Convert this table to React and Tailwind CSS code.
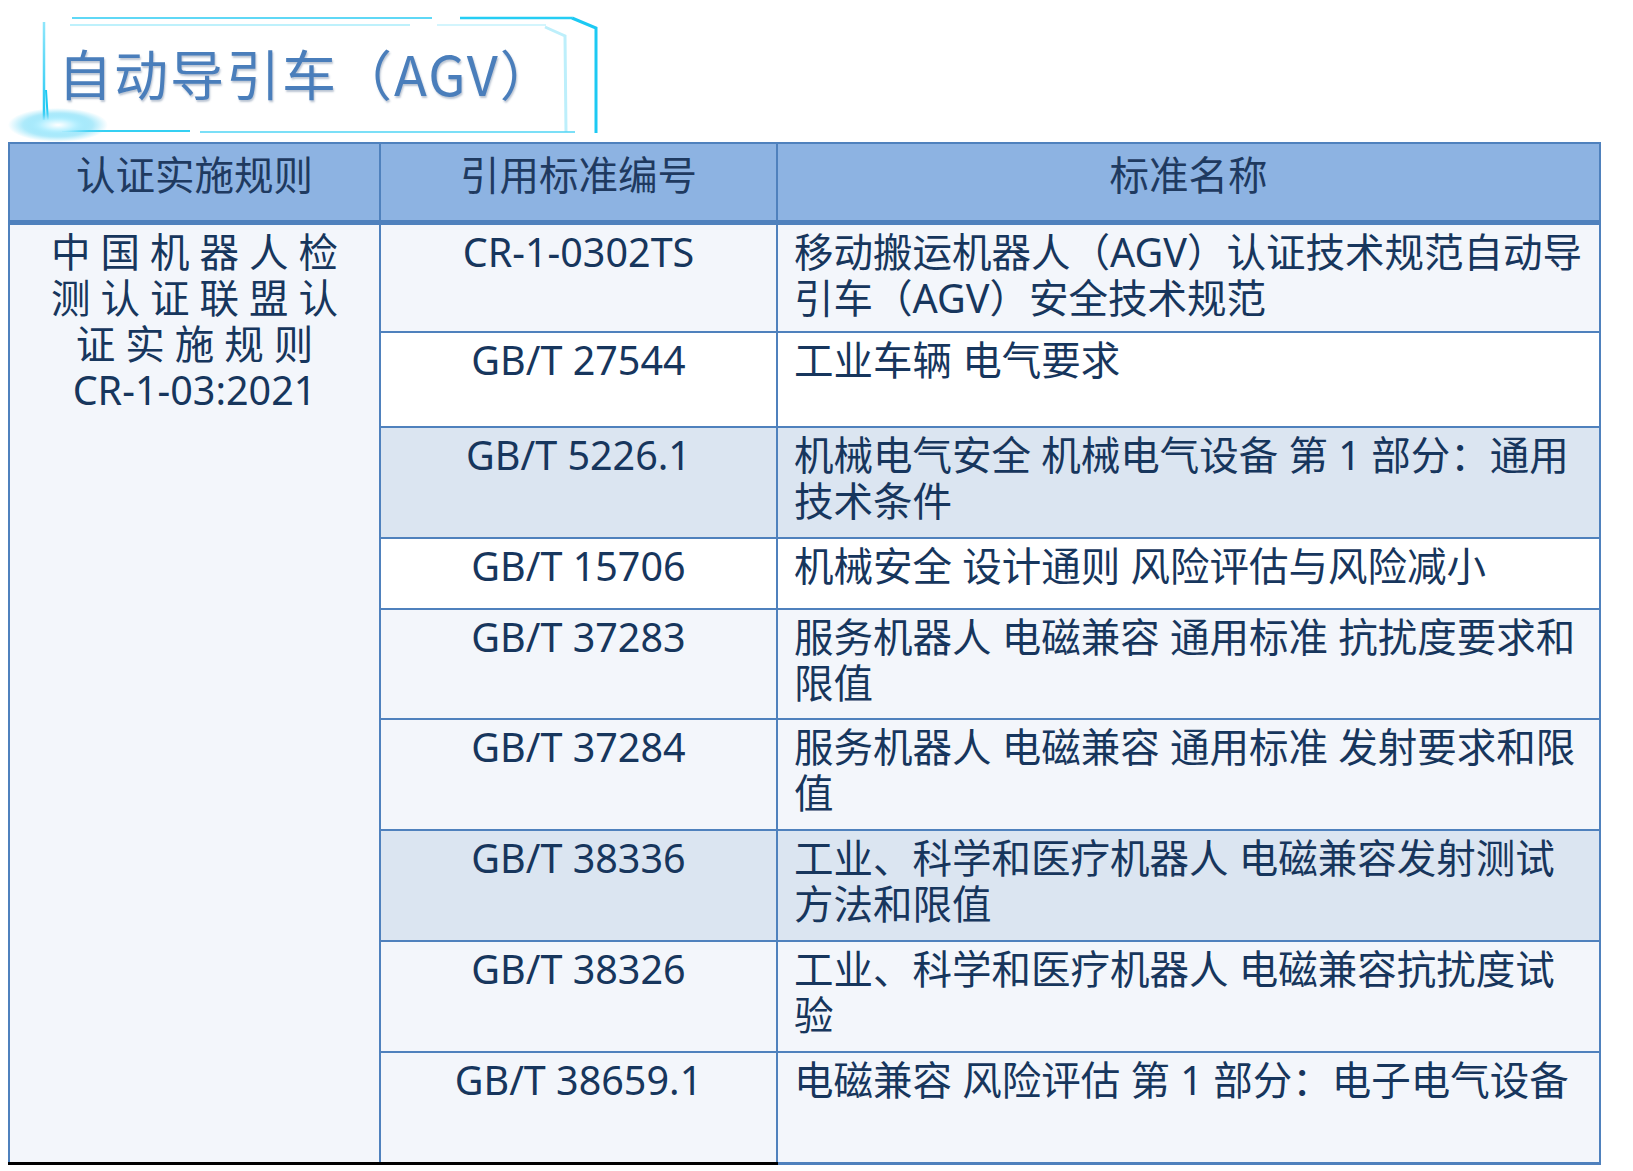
import React from 'react';

const FONT = { fontFamily: '"Noto Sans", "Noto Sans CJK SC", sans-serif' };

const rows = [
  { code: 'CR-1-0302TS', name: ['移动搬运机器人（AGV）认证技术规范自动导', '引车（AGV）安全技术规范'], h: 'h-[110px]', bg: 'bg-[#f3f6fb]' },
  { code: 'GB/T 27544', name: ['工业车辆 电气要求'], h: 'h-[95px]', bg: 'bg-white' },
  { code: 'GB/T 5226.1', name: ['机械电气安全 机械电气设备 第 1 部分：通用', '技术条件'], h: 'h-[111px]', bg: 'bg-[#dbe5f1]' },
  { code: 'GB/T 15706', name: ['机械安全 设计通则 风险评估与风险减小'], h: 'h-[71px]', bg: 'bg-white' },
  { code: 'GB/T 37283', name: ['服务机器人 电磁兼容 通用标准 抗扰度要求和', '限值'], h: 'h-[110px]', bg: 'bg-[#f3f6fb]' },
  { code: 'GB/T 37284', name: ['服务机器人 电磁兼容 通用标准 发射要求和限', '值'], h: 'h-[111px]', bg: 'bg-[#f3f6fb]' },
  { code: 'GB/T 38336', name: ['工业、科学和医疗机器人 电磁兼容发射测试', '方法和限值'], h: 'h-[111px]', bg: 'bg-[#dbe5f1]' },
  { code: 'GB/T 38326', name: ['工业、科学和医疗机器人 电磁兼容抗扰度试', '验'], h: 'h-[111px]', bg: 'bg-[#f3f6fb]' },
  { code: 'GB/T 38659.1', name: ['电磁兼容 风险评估 第 1 部分：电子电气设备'], h: 'h-[111px]', bg: 'bg-[#f3f6fb]' },
];

function TitleFrame() {
  return (
    <svg className="absolute left-0 top-0" width="620" height="142" viewBox="0 0 620 142">
      <defs>
        <radialGradient id="glow" cx="50%" cy="50%" r="50%">
          <stop offset="0%" stopColor="#ffffff" />
          <stop offset="35%" stopColor="#b8f0ff" />
          <stop offset="70%" stopColor="#5fd6f7" stopOpacity="0.5" />
          <stop offset="100%" stopColor="#5fd6f7" stopOpacity="0" />
        </radialGradient>
        <linearGradient id="leftv" gradientUnits="userSpaceOnUse" x1="0" y1="22" x2="0" y2="122">
          <stop offset="0%" stopColor="#8fe6fb" />
          <stop offset="100%" stopColor="#19c6f2" />
        </linearGradient>
      </defs>
      {/* top lines */}
      <line x1="72" y1="18" x2="432" y2="18" stroke="#5fd8f6" strokeWidth="2" />
      <line x1="460" y1="18" x2="572" y2="18" stroke="#25cdf4" strokeWidth="2.5" />
      <line x1="70" y1="25" x2="410" y2="25" stroke="#a9ecfb" strokeWidth="1.5" />
      <line x1="437" y1="25" x2="546" y2="25" stroke="#c4f2fc" strokeWidth="1.5" />
      {/* right corner */}
      <path d="M572 18 L596 28 L596 133" fill="none" stroke="#1cc9f3" strokeWidth="3" />
      <path d="M545 27 L565 36 L566 132" fill="none" stroke="#bdeffb" strokeWidth="3" />
      {/* left vertical */}
      <line x1="44" y1="22" x2="44" y2="120" stroke="url(#leftv)" strokeWidth="2.5" />
      <line x1="46" y1="90" x2="48" y2="122" stroke="#1cc9f3" strokeWidth="2" />
      {/* bottom line */}
      <line x1="62" y1="131" x2="190" y2="131" stroke="#35d0f3" strokeWidth="2" />
      <line x1="200" y1="132" x2="575" y2="132" stroke="#4fd4f4" strokeWidth="1.5" />
      {/* glow */}
      <ellipse cx="58" cy="125" rx="50" ry="17" fill="url(#glow)" />
    </svg>
  );
}

export default function App() {
  return (
    <div className="relative h-[1171px] w-[1633px] overflow-hidden bg-white" style={FONT}>
      <div className="relative h-[142px]">
        <TitleFrame />
        <h1
          className="relative pl-[58px] pt-[37px] text-[54px] leading-[72px] font-normal tracking-[2px] text-[#4a7ebb] [text-shadow:1px_2px_2px_rgba(60,90,130,0.35)]"
          style={{ fontFamily: '"Noto Sans CJK SC", sans-serif' }}
        >
          自动导引车（AGV）
        </h1>
      </div>

      <table className="ml-[8px] w-[1591px] table-fixed border-collapse text-[39.5px] text-[#17365d]">
        <colgroup>
          <col className="w-[371px]" />
          <col className="w-[397px]" />
          <col className="w-[823px]" />
        </colgroup>
        <thead>
          <tr className="h-[79px] bg-[#8db3e2] text-[#1f3a60]">
            <th className="border-2 border-b-[5px] border-[#4f81bd] pb-[14px] text-center align-middle font-normal leading-[46px]">
              认证实施规则
            </th>
            <th className="border-2 border-b-[5px] border-[#4f81bd] pb-[14px] text-center align-middle font-normal leading-[46px]">
              引用标准编号
            </th>
            <th className="border-2 border-b-[5px] border-[#4f81bd] pb-[14px] text-center align-middle font-normal leading-[46px]">
              标准名称
            </th>
          </tr>
        </thead>
        <tbody>
          {rows.map((row, i) => (
            <tr key={row.code} className={row.h}>
              {i === 0 && (
                <td
                  rowSpan={rows.length}
                  className="border-2 border-b-[3px] border-[#4f81bd] border-b-black bg-[#f3f6fb] pt-[4px] text-center align-top leading-[46px]"
                >
                  <div className="tracking-[10px] pl-[10px]">中国机器人检</div>
                  <div className="tracking-[10px] pl-[10px]">测认证联盟认</div>
                  <div className="tracking-[10px] pl-[10px]">证实施规则</div>
                  <div>CR-1-03:2021</div>
                </td>
              )}
              <td
                className={`border-2 border-[#4f81bd] ${row.bg} pt-[4px] text-center align-top leading-[46px] ${
                  i === rows.length - 1 ? 'border-b-[3px] border-b-black' : ''
                }`}
              >
                {row.code}
              </td>
              <td
                className={`border-2 border-[#4f81bd] ${row.bg} pl-[16px] pt-[4px] text-left align-top leading-[46px] ${
                  i === rows.length - 1 ? 'border-b-[3px]' : ''
                }`}
              >
                {row.name.map((line) => (
                  <div key={line} className="whitespace-nowrap">
                    {line}
                  </div>
                ))}
              </td>
            </tr>
          ))}
        </tbody>
      </table>
    </div>
  );
}
